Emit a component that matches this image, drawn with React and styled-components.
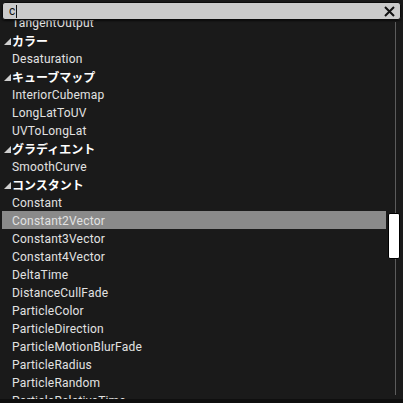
import React from "react";
import styled, { createGlobalStyle } from "styled-components";

const Global = createGlobalStyle`
  html, body { margin: 0; padding: 0; background: #1a1a1a; }
  body { font-family: Roboto, "Noto Sans CJK JP", sans-serif; }
`;

const Frame = styled.div`
  width: 403px;
  height: 403px;
  background: #1a1a1a;
  display: flex;
  flex-direction: column;
  overflow: hidden;
  position: relative;
`;

const SearchBar = styled.div`
  position: absolute;
  top: 2px;
  left: 2px;
  right: 2px;
  height: 18px;
  background: #cbcbcb;
  border: 1px solid #0c0c0c;
  border-radius: 3px;
  box-sizing: border-box;
  display: flex;
  align-items: center;
  padding: 0 5px 0 6px;
  z-index: 2;
  box-shadow: 0 1px 2px rgba(0, 0, 0, 0.6);
`;

const Query = styled.span`
  font-size: 12px;
  color: #111;
  line-height: 16px;
`;

const Caret = styled.span`
  display: inline-block;
  width: 1px;
  height: 13px;
  background: #111;
  margin-left: 1px;
  vertical-align: middle;
`;

const Spacer = styled.div`
  flex: 1;
`;

const Body = styled.div`
  flex: 1;
  display: flex;
  min-height: 0;
`;

const List = styled.div`
  width: 386px;
  padding-left: 2px;
  box-sizing: border-box;
  overflow: hidden;
  padding-top: 13px;
`;

const Row = styled.div`
  height: 18px;
  display: flex;
  align-items: center;
  padding-left: ${(p) => (p.$header ? 2 : 10)}px;
  padding-top: 1px;
  box-sizing: border-box;
  background: ${(p) => (p.$selected ? "#8a8a8a" : "transparent")};
  color: ${(p) => (p.$header ? "#ffffff" : "#e2e2e2")};
  font-size: 12px;
  letter-spacing: ${(p) => (p.$header ? 0 : 0.2)}px;
  font-weight: ${(p) => (p.$header ? 700 : 400)};
  white-space: nowrap;
`;

const Arrow = styled.svg`
  width: 7px;
  height: 7px;
  margin-right: 1px;
  margin-top: 1px;
`;

const Track = styled.div`
  flex: 1;
  position: relative;
  display: flex;
  justify-content: center;
`;

const Line = styled.div`
  width: 1px;
  margin: 22px 0 4px 1px;
  background: #5c5c5c;
`;

const Thumb = styled.div`
  position: absolute;
  top: 213px;
  left: 2px;
  width: 12px;
  height: 46px;
  box-sizing: border-box;
  background: #ffffff;
  border: 1px solid #000;
  border-radius: 2px;
`;

const Footer = styled.div`
  height: 4px;
  background: #0f0f0f;
`;

const rows = [
  { t: "TangentOutput" },
  { t: "カラー", h: true },
  { t: "Desaturation" },
  { t: "キューブマップ", h: true },
  { t: "InteriorCubemap" },
  { t: "LongLatToUV" },
  { t: "UVToLongLat" },
  { t: "グラディエント", h: true },
  { t: "SmoothCurve" },
  { t: "コンスタント", h: true },
  { t: "Constant" },
  { t: "Constant2Vector", s: true },
  { t: "Constant3Vector" },
  { t: "Constant4Vector" },
  { t: "DeltaTime" },
  { t: "DistanceCullFade" },
  { t: "ParticleColor" },
  { t: "ParticleDirection" },
  { t: "ParticleMotionBlurFade" },
  { t: "ParticleRadius" },
  { t: "ParticleRandom" },
  { t: "ParticleRelativeTime" },
];

export default function App() {
  return (
    <Frame>
      <Global />
      <SearchBar>
        <Query>c</Query>
        <Caret />
        <Spacer />
        <svg width="11" height="11" viewBox="0 0 11 11">
          <path d="M1 1 L10 10 M10 1 L1 10" stroke="#111" strokeWidth="2" />
        </svg>
      </SearchBar>
      <Body>
        <List>
          {rows.map((r) => (
            <Row key={r.t} $header={r.h} $selected={r.s}>
              {r.h && (
                <Arrow viewBox="0 0 7 7">
                  <polygon points="7,0 7,7 0,7" fill="#cfcfcf" />
                </Arrow>
              )}
              {r.t}
            </Row>
          ))}
        </List>
        <Track>
          <Line />
          <Thumb />
        </Track>
      </Body>
      <Footer />
    </Frame>
  );
}
